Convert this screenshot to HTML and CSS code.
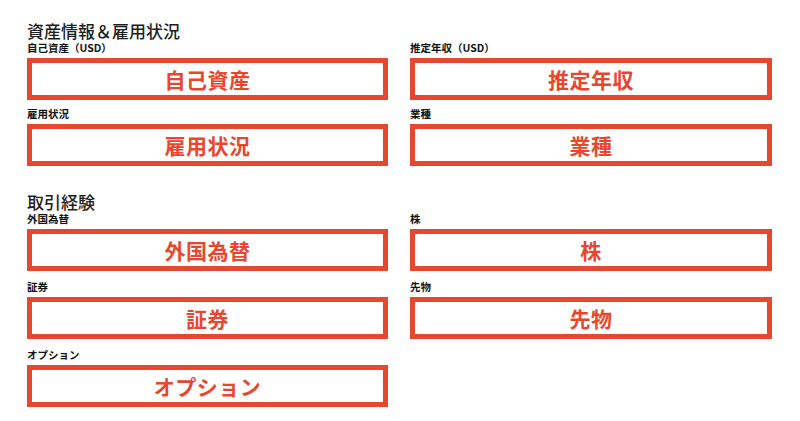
FILE: index.html
```html
<!DOCTYPE html>
<html lang="ja">
<head>
<meta charset="utf-8">
<link rel="stylesheet" href="styles.css">
</head>
<body>
<div class="page">
  <section class="section">
    <h2 class="section-title">資産情報＆雇用状況</h2>
    <div class="grid">
      <div class="field">
        <div class="label">自己資産（USD）</div>
        <div class="box">自己資産</div>
      </div>
      <div class="field">
        <div class="label">推定年収（USD）</div>
        <div class="box">推定年収</div>
      </div>
      <div class="field">
        <div class="label">雇用状況</div>
        <div class="box">雇用状況</div>
      </div>
      <div class="field">
        <div class="label">業種</div>
        <div class="box">業種</div>
      </div>
    </div>
  </section>
  <section class="section second">
    <h2 class="section-title">取引経験</h2>
    <div class="grid">
      <div class="field">
        <div class="label">外国為替</div>
        <div class="box">外国為替</div>
      </div>
      <div class="field">
        <div class="label">株</div>
        <div class="box">株</div>
      </div>
      <div class="field">
        <div class="label">証券</div>
        <div class="box">証券</div>
      </div>
      <div class="field">
        <div class="label">先物</div>
        <div class="box">先物</div>
      </div>
      <div class="field">
        <div class="label">オプション</div>
        <div class="box">オプション</div>
      </div>
    </div>
  </section>
</div>
</body>
</html>
```

FILE: styles.css
```css
html, body {
  margin: 0;
  padding: 0;
  background: #ffffff;
}
body {
  font-family: "Noto Sans CJK JP", "Noto Sans", sans-serif;
  color: #1a1a1a;
}
.page {
  width: 745px;
  padding: 21px 0 0 27px;
}
.section-title {
  margin: 0;
  font-size: 17px;
  line-height: 20px;
  font-weight: 500;
  color: #1e1e1e;
}
.second {
  margin-top: 26px;
}
.grid {
  display: grid;
  grid-template-columns: 361px 362px;
  column-gap: 22px;
  row-gap: 7px;
}
.second .grid {
  row-gap: 9px;
}
.field {
  display: flex;
  flex-direction: column;
  gap: 4px;
}
.label {
  font-size: 10.5px;
  line-height: 13px;
  font-weight: 700;
  color: #111;
}
.box {
  box-sizing: border-box;
  height: 42px;
  border: 5px solid #e8472f;
  display: flex;
  align-items: center;
  justify-content: center;
  font-size: 21px;
  font-weight: 700;
  color: #e8472f;
  letter-spacing: 0.5px;
}
```
